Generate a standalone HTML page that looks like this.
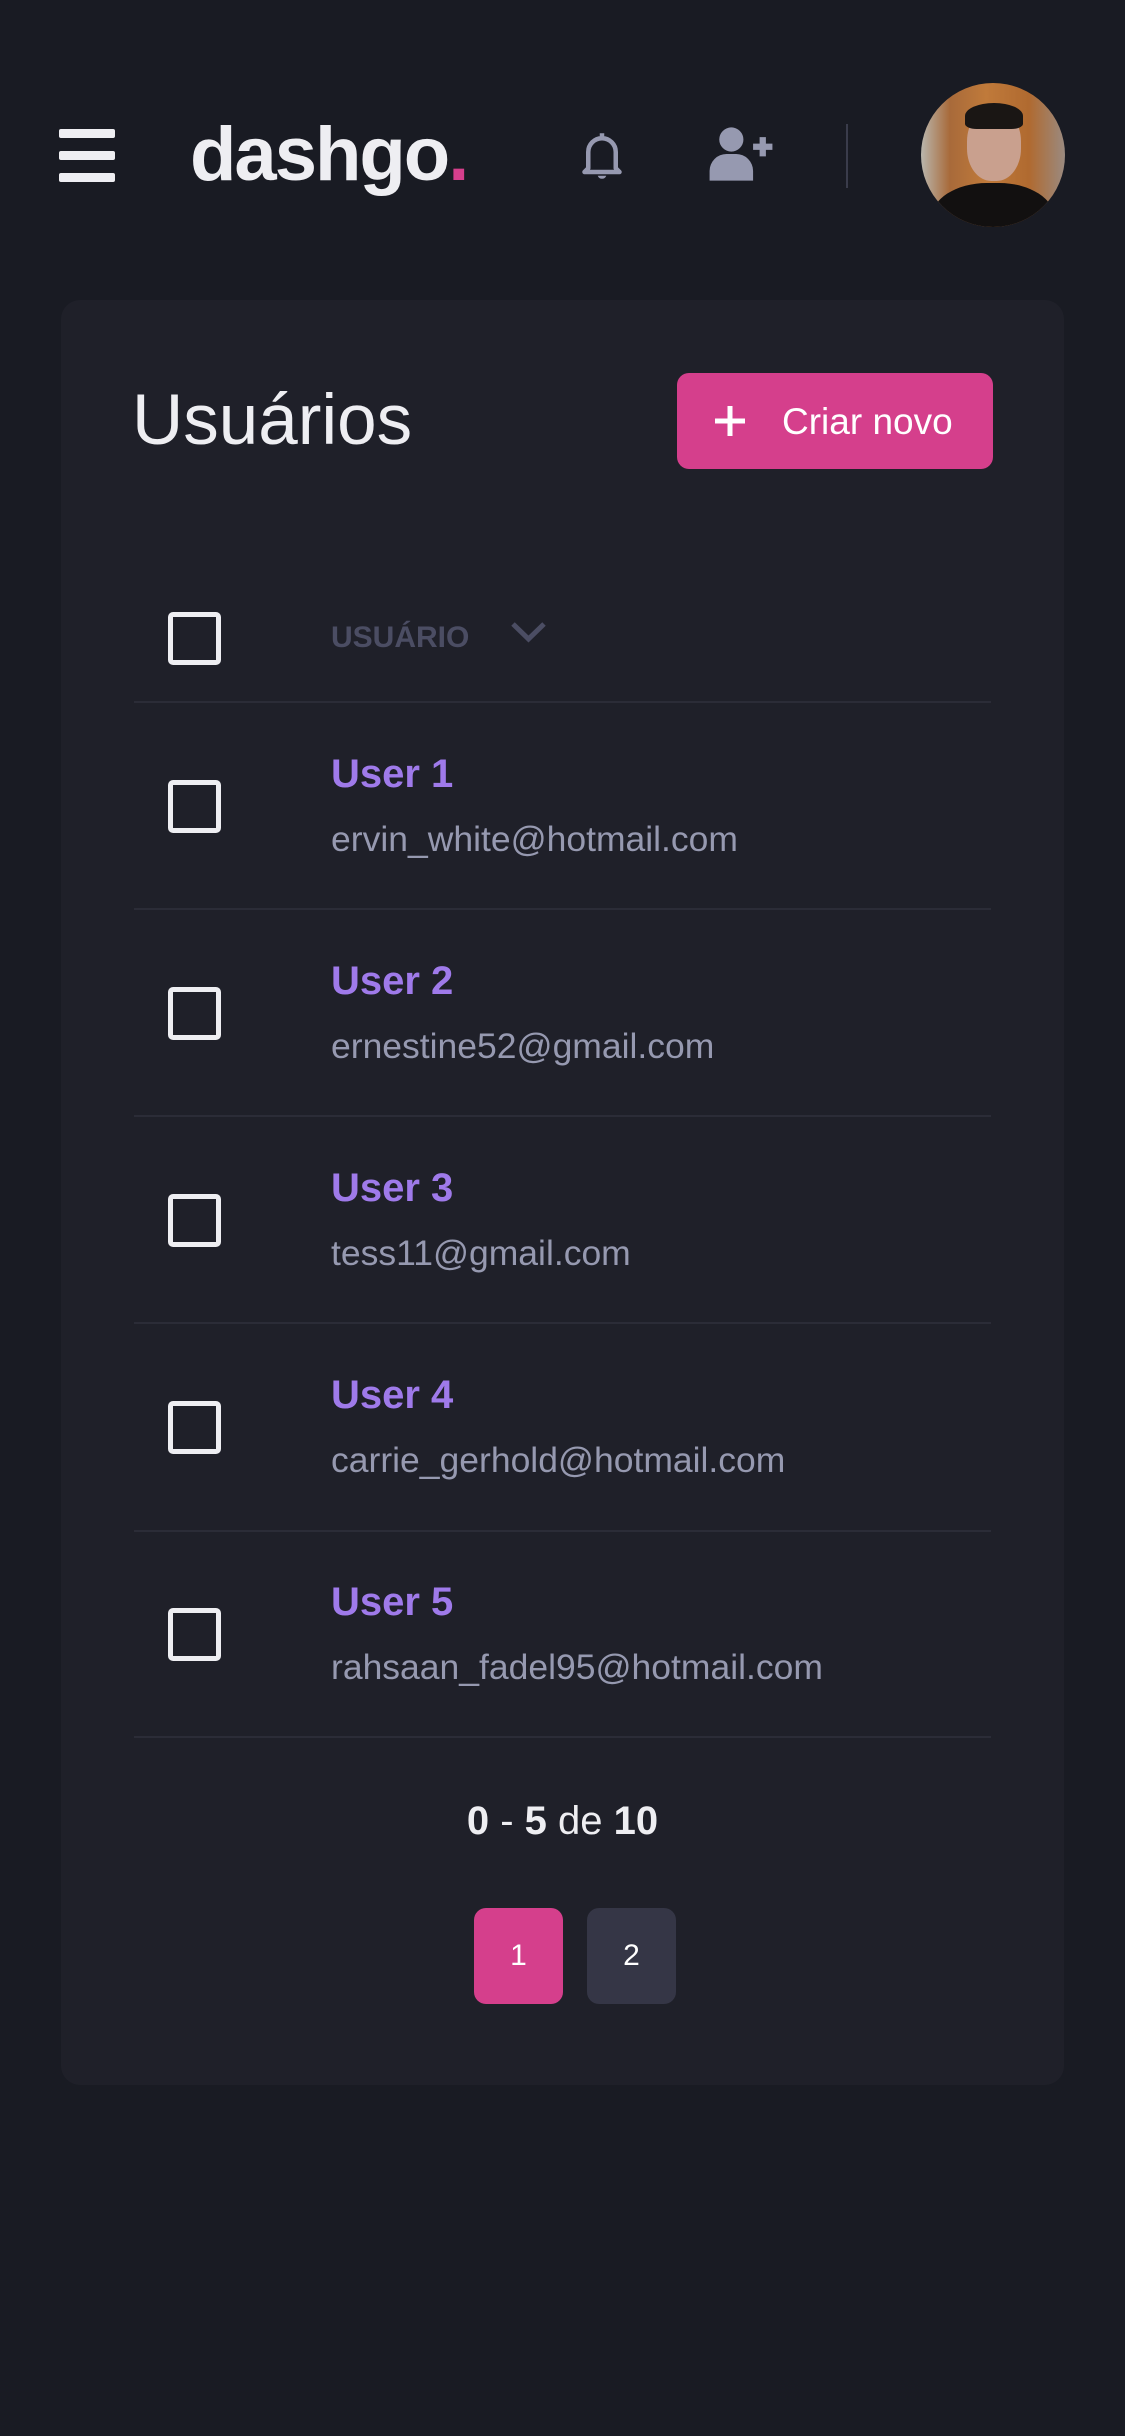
<!DOCTYPE html>
<html><head><meta charset="utf-8"><style>
*{margin:0;padding:0;box-sizing:border-box}
body{width:1125px;height:2436px;background:#191b23;font-family:"Liberation Sans",sans-serif;position:relative;overflow:hidden;color:#eeeef2}
.a{position:absolute}
.bar{position:absolute;left:59px;width:56px;height:9px;background:#eeeef2;border-radius:2px}
.card{left:61px;top:300px;width:1003px;height:1785px;background:#1f2029;border-radius:19px}
.cb{position:absolute;left:168px;width:53px;height:53px;border:5px solid #eeeef2;border-radius:5px}
.line{position:absolute;left:134px;width:857px;height:2px;background:#2b2c37}
.name{position:absolute;left:331px;font-weight:bold;font-size:40px;color:#9f7aea}
.mail{position:absolute;left:331px;font-size:35.5px;color:#9699b0}
.pg{position:absolute;top:1908px;width:89px;height:96px;border-radius:12px;color:#fff;font-size:30px;text-align:center;line-height:96px}
</style></head><body>
<div class="bar" style="top:129px"></div>
<div class="bar" style="top:151px"></div>
<div class="bar" style="top:173px"></div>
<div class="a" style="left:190px;top:111px;font-size:76px;font-weight:bold;letter-spacing:-2px;color:#eeeef2">dashgo<span style="color:#d53f8c">.</span></div>
<svg class="a" style="left:572px;top:126px" width="60" height="62" viewBox="0 0 24 24"><path d="M12 2.5v1.2M6.5 16.5V10a5.5 5.5 0 0 1 11 0v6.5l1.5 1.5H5z" fill="none" stroke="#9699b0" stroke-width="1.8" stroke-linejoin="round"/><path d="M10.3 19.5a1.8 1.8 0 0 0 3.4 0z" fill="#9699b0"/></svg>
<svg class="a" style="left:707px;top:125px" width="68" height="58" viewBox="0 0 28 24"><circle cx="10" cy="6" r="5" fill="#9699b0"/><path d="M1 23v-4a7 7 0 0 1 7-7h4a7 7 0 0 1 7 7v4z" fill="#9699b0"/><path d="M23 5v8M19 9h8" stroke="#9699b0" stroke-width="2.6"/></svg>
<div class="a" style="left:846px;top:124px;width:2px;height:64px;background:#3a3c4b"></div>
<div class="a" style="left:921px;top:83px;width:144px;height:144px;border-radius:50%;overflow:hidden;background:linear-gradient(90deg,#b9b6ad 0%,#a86a3a 20%,#c07a3a 45%,#b06a30 75%,#9a8a80 100%)">
<div class="a" style="left:46px;top:26px;width:54px;height:72px;border-radius:45%;background:#c9a08e"></div>
<div class="a" style="left:44px;top:20px;width:58px;height:26px;border-radius:50% 50% 20% 20%;background:#1a1614"></div>
<div class="a" style="left:10px;top:100px;width:124px;height:80px;border-radius:45% 45% 0 0;background:#121010"></div>
</div>
<div class="a card"></div>
<div class="a" style="left:132px;top:380px;font-size:71px;color:#eeeef2">Usuários</div>
<div class="a" style="left:677px;top:373px;width:316px;height:96px;background:#d53f8c;border-radius:12px"></div>
<svg class="a" style="left:713px;top:404px" width="34" height="34" viewBox="0 0 34 34"><path d="M17 2v30M2 17h30" stroke="#fff" stroke-width="5"/></svg>
<div class="a" style="left:782px;top:401px;font-size:37px;color:#fff">Criar novo</div>
<div class="cb" style="top:612px"></div>
<div class="a" style="left:331px;top:621px;font-size:30px;font-weight:bold;color:#4b4d63">USUÁRIO</div>
<svg class="a" style="left:510px;top:621px" width="37" height="22" viewBox="0 0 37 22"><path d="M3 3l15.5 15L34 3" fill="none" stroke="#4b4d63" stroke-width="5"/></svg>
<div class="line" style="top:701px"></div>

<div class="cb" style="top:780px"></div><div class="name" style="top:752px">User 1</div><div class="mail" style="top:819px">ervin_white@hotmail.com</div><div class="line" style="top:908px"></div>
<div class="cb" style="top:987px"></div><div class="name" style="top:959px">User 2</div><div class="mail" style="top:1026px">ernestine52@gmail.com</div><div class="line" style="top:1115px"></div>
<div class="cb" style="top:1194px"></div><div class="name" style="top:1166px">User 3</div><div class="mail" style="top:1233px">tess11@gmail.com</div><div class="line" style="top:1322px"></div>
<div class="cb" style="top:1401px"></div><div class="name" style="top:1373px">User 4</div><div class="mail" style="top:1440px">carrie_gerhold@hotmail.com</div><div class="line" style="top:1530px"></div>
<div class="cb" style="top:1608px"></div><div class="name" style="top:1580px">User 5</div><div class="mail" style="top:1647px">rahsaan_fadel95@hotmail.com</div><div class="line" style="top:1736px"></div>

<div class="a" style="left:0;width:1125px;text-align:center;top:1799px;font-size:40px;color:#eeeef2"><b>0</b> - <b>5</b> de <b>10</b></div>
<div class="pg" style="left:474px;background:#d53f8c">1</div>
<div class="pg" style="left:587px;background:#353646">2</div>
</body></html>
